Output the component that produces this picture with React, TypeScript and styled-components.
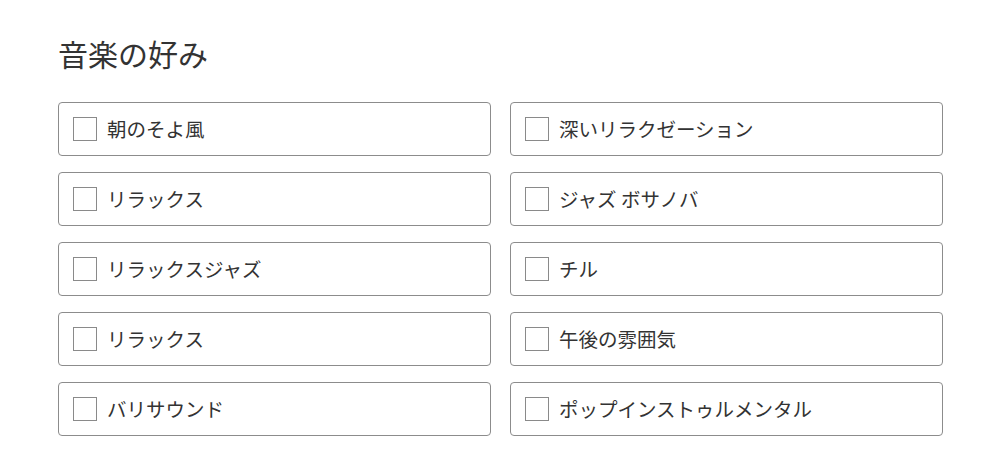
import React from 'react';
import styled, { createGlobalStyle } from 'styled-components';

const GlobalStyle = createGlobalStyle`
  html, body {
    margin: 0;
    padding: 0;
    background: #fff;
  }
  body {
    font-family: "Noto Sans CJK JP", "Noto Sans", sans-serif;
    color: #333;
  }
`;

const StyledPreferences = styled.section.attrs({
  className: 'MusicPreferences',
})`
  width: 885px;
  padding: 31px 0 0 58px;
  .title {
    margin: 0 0 27px;
    font-size: 30px;
    font-weight: 400;
    line-height: 44px;
    color: #333;
  }
  .options {
    display: grid;
    grid-template-columns: 433px 433px;
    column-gap: 19px;
    row-gap: 16px;
  }
`;

const OptionCard = styled.label`
  display: flex;
  align-items: center;
  box-sizing: border-box;
  height: 54px;
  padding: 0 14px;
  border: 1.5px solid #8c8c8c;
  border-radius: 4px;
  background: #fff;
  cursor: pointer;
  input {
    appearance: none;
    flex: none;
    box-sizing: border-box;
    width: 24px;
    height: 24px;
    margin: 0 10px 0 0;
    border: 1.5px solid #8a8a8a;
    border-radius: 0;
    background: #fff;
  }
  span {
    font-size: 19.5px;
    line-height: 1;
    color: #333;
    white-space: nowrap;
  }
`;

const options = [
  '朝のそよ風',
  '深いリラクゼーション',
  'リラックス',
  'ジャズ ボサノバ',
  'リラックスジャズ',
  'チル',
  'リラックス',
  '午後の雰囲気',
  'バリサウンド',
  'ポップインストゥルメンタル',
];

const App = () => {
  return (
    <>
      <GlobalStyle />
      <StyledPreferences>
        <h2 className='title'>音楽の好み</h2>
        <div className='options'>
          {options.map((name, i) => (
            <OptionCard key={i}>
              <input type='checkbox' />
              <span>{name}</span>
            </OptionCard>
          ))}
        </div>
      </StyledPreferences>
    </>
  );
};

export default App;
